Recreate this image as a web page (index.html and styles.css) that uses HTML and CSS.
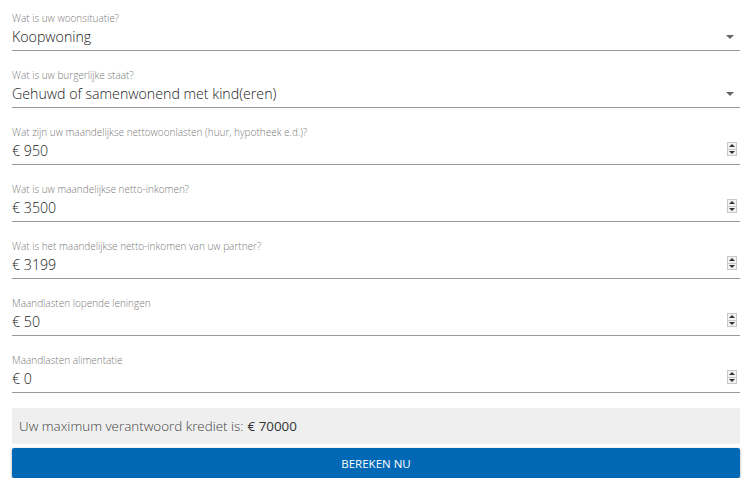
FILE: index.html
```html
<!DOCTYPE html>
<html lang="nl">
<head>
<meta charset="utf-8">
<title>Kredietcalculator</title>
<link rel="stylesheet" href="styles.css">
</head>
<body>
<form class="calc">
  <div class="field">
    <div class="label">Wat is uw woonsituatie?</div>
    <div class="row"><span class="value">Koopwoning</span><span class="caret"></span></div>
  </div>
  <div class="field">
    <div class="label">Wat is uw burgerlijke staat?</div>
    <div class="row"><span class="value">Gehuwd of samenwonend met kind(eren)</span><span class="caret"></span></div>
  </div>
  <div class="field">
    <div class="label">Wat zijn uw maandelijkse nettowoonlasten (huur, hypotheek e.d.)?</div>
    <div class="row"><span class="value">€ 950</span><span class="spin"><i class="up"></i><i class="down"></i></span></div>
  </div>
  <div class="field">
    <div class="label">Wat is uw maandelijkse netto-inkomen?</div>
    <div class="row"><span class="value">€ 3500</span><span class="spin"><i class="up"></i><i class="down"></i></span></div>
  </div>
  <div class="field">
    <div class="label">Wat is het maandelijkse netto-inkomen van uw partner?</div>
    <div class="row"><span class="value">€ 3199</span><span class="spin"><i class="up"></i><i class="down"></i></span></div>
  </div>
  <div class="field">
    <div class="label">Maandlasten lopende leningen</div>
    <div class="row"><span class="value">€ 50</span><span class="spin"><i class="up"></i><i class="down"></i></span></div>
  </div>
  <div class="field">
    <div class="label">Maandlasten alimentatie</div>
    <div class="row"><span class="value">€ 0</span><span class="spin"><i class="up"></i><i class="down"></i></span></div>
  </div>
  <div class="result">Uw maximum verantwoord krediet is: <strong>€ 70000</strong></div>
  <div class="button">BEREKEN NU</div>
</form>
</body>
</html>
```
FILE: styles.css
```css
html, body {
  margin: 0;
  padding: 0;
  background: #fff;
}
body {
  font-family: "Open Sans", "Liberation Sans", sans-serif;
  color: #333;
}
.calc {
  padding: 0 12px;
  display: flex;
  flex-direction: column;
}
.field {
  padding-top: 12px;
  display: flex;
  flex-direction: column;
}
.field + .field {
  margin-top: 6px;
}
.label {
  font-size: 10px;
  font-weight: 300;
  line-height: 13px;
  color: #7a7a7a;
  margin-bottom: 2px;
}
.row {
  height: 23px;
  display: flex;
  align-items: flex-start;
  justify-content: space-between;
  border-bottom: 1px solid #999;
}
.value {
  font-size: 14.2px;
  font-weight: 300;
  line-height: 20px;
  color: #222;
}
.caret {
  width: 0;
  height: 0;
  border-left: 4px solid transparent;
  border-right: 4px solid transparent;
  border-top: 4px solid #666;
  margin-top: 8px;
  margin-right: 6px;
}
.spin {
  width: 10px;
  height: 14px;
  margin-top: 1px;
  margin-right: 3px;
  display: flex;
  flex-direction: column;
  border: 1px solid #c8c8c8;
  box-sizing: border-box;
  background: #f2f2f2;
}
.spin i {
  flex: 1;
  display: flex;
  align-items: center;
  justify-content: center;
}
.spin i + i {
  border-top: 1px solid #c8c8c8;
}
.spin i::before {
  content: "";
  width: 0;
  height: 0;
  border-left: 3px solid transparent;
  border-right: 3px solid transparent;
}
.spin .up::before {
  border-bottom: 3px solid #333;
}
.spin .down::before {
  border-top: 3px solid #333;
}
.result {
  margin-top: 15px;
  height: 36px;
  background: #efefef;
  display: flex;
  align-items: center;
  padding-left: 7px;
  font-size: 13.4px;
  font-weight: 300;
  color: #444;
}
.result strong {
  font-weight: 500;
  color: #333;
  margin-left: 4px;
}
.button {
  margin-top: 4px;
  height: 30px;
  background: #0068b4;
  border-radius: 2px;
  box-shadow: 0 1px 3px rgba(0, 0, 0, 0.35);
  color: #fff;
  font-size: 11.5px;
  font-weight: 400;
  display: flex;
  align-items: center;
  justify-content: center;
}
```
